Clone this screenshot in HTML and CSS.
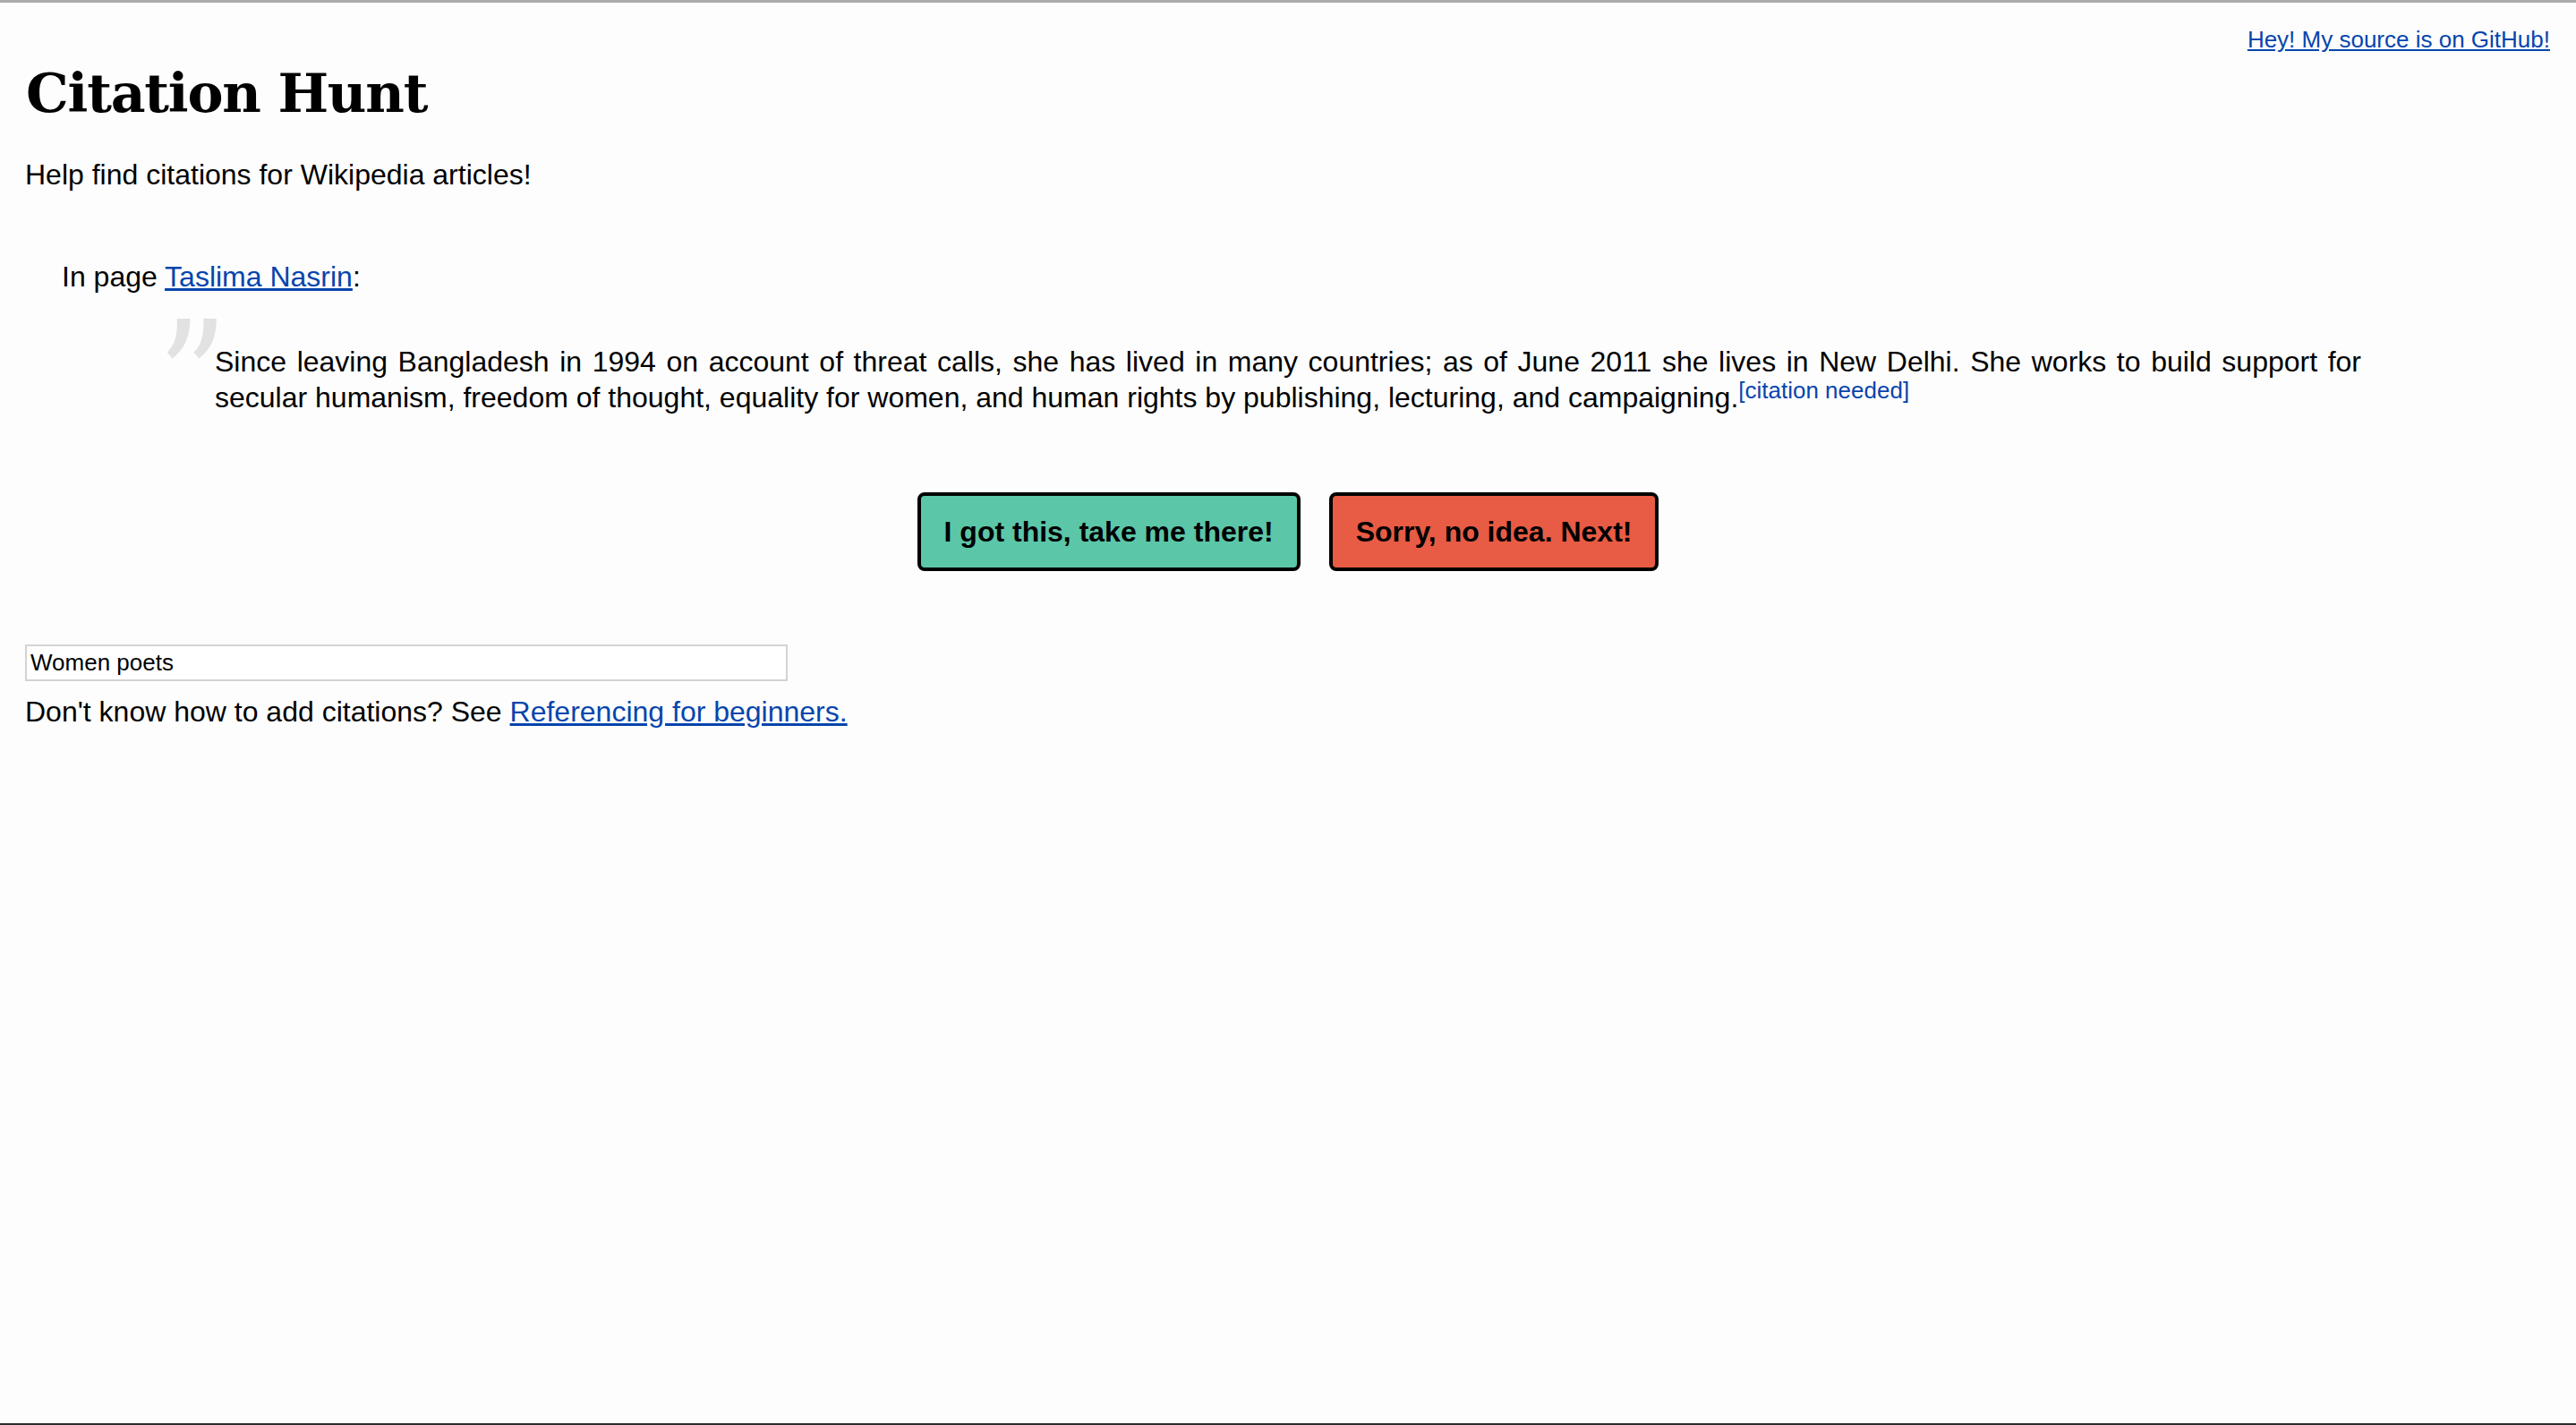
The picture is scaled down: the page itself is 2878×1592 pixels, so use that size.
FILE: index.html
```html
<!DOCTYPE html>
<html lang="en">
<head>
<meta charset="utf-8">
<title>Citation Hunt</title>
<link rel="stylesheet" href="styles.css">
</head>
<body>
<a class="github" href="#">Hey! My source is on GitHub!</a>
<h1 class="title">Citation Hunt</h1>
<p class="tagline">Help find citations for Wikipedia articles!</p>
<div class="snippet">
  <p class="in-page">In page <a href="#">Taslima Nasrin</a>:</p>
</div>
<blockquote class="quote">Since leaving Bangladesh in 1994 on account of threat calls, she has lived in many countries; as of June 2011 she lives in New Delhi. She works to build support for secular humanism, freedom of thought, equality for women, and human rights by publishing, lecturing, and campaigning.<sup class="cn"><a href="#">[citation needed]</a></sup></blockquote>
<div class="actions">
  <button class="btn btn-go" type="button">I got this, take me there!</button>
  <button class="btn btn-next" type="button">Sorry, no idea. Next!</button>
</div>
<input class="category" type="text" value="Women poets">
<p class="help">Don't know how to add citations? See <a href="#">Referencing for beginners.</a></p>
</body>
</html>
```
FILE: styles.css
```css
html {
  min-height: 100%;
}
body {
  margin: 0;
  padding: 0 28px;
  min-height: 100vh;
  box-sizing: border-box;
  border-top: 3px solid #acacac;
  border-bottom: 2px solid #2b2b2b;
  background: #fdfdfd;
  color: #000;
  font-family: "Liberation Sans", Arial, sans-serif;
  font-size: 32px;
  line-height: 40px;
}
a {
  color: #0645ad;
}
.github {
  position: absolute;
  top: 29px;
  right: 29px;
  font-size: 26px;
  line-height: 30px;
}
.title {
  margin: 65px 0 35px 1px;
  font-family: "DejaVu Serif", Georgia, serif;
  font-weight: bold;
  font-size: 60px;
  line-height: 72px;
  letter-spacing: -1.2px;
}
.tagline {
  margin: 0;
}
.snippet {
  margin: 74px 0 0 41px;
}
.in-page {
  margin: 0;
}
.quote {
  position: relative;
  margin: 55px 212px 0 212px;
  text-align: justify;
}
.quote::before {
  content: "\201D";
  position: absolute;
  left: -64px;
  top: -49px;
  font-family: "DejaVu Serif", serif;
  font-size: 180px;
  line-height: 180px;
  color: #e2e2e2;
  transform: scaleX(0.85);
  transform-origin: left top;
}
.cn {
  font-size: 26px;
  line-height: 0;
  vertical-align: 10px;
}
.cn a {
  text-decoration: none;
}
.actions {
  display: flex;
  justify-content: center;
  gap: 32px;
  margin-top: 86px;
}
.btn {
  height: 88px;
  padding: 0 26px;
  border: 4px solid #000;
  border-radius: 8px;
  font-family: "Liberation Sans", Arial, sans-serif;
  font-weight: bold;
  font-size: 32px;
  line-height: 80px;
  color: #000;
}
.btn-go {
  background: #5bc6a8;
}
.btn-next {
  background: #e85b44;
}
.category {
  display: block;
  box-sizing: border-box;
  width: 852px;
  height: 41px;
  margin: 82px 0 0 0;
  padding: 0 4px;
  border: 2px solid #d3d3d3;
  background: #fff;
  font-family: "Liberation Sans", Arial, sans-serif;
  font-size: 26px;
  color: #000;
}
.help {
  margin: 14px 0 0 0;
}
```
